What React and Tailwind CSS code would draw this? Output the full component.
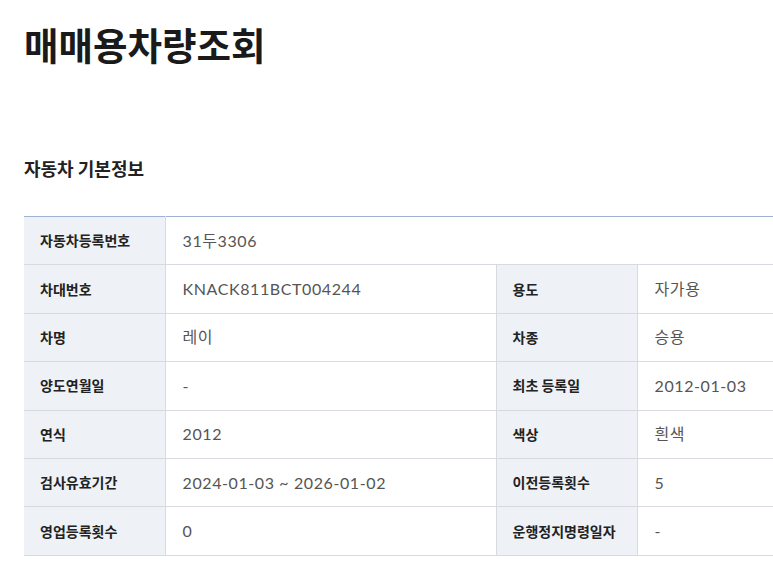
const rows = [
  { label: '차대번호', value: 'KNACK811BCT004244', label2: '용도', value2: '자가용' },
  { label: '차명', value: '레이', label2: '차종', value2: '승용' },
  { label: '양도연월일', value: '-', label2: '최초 등록일', value2: '2012-01-03' },
  { label: '연식', value: '2012', label2: '색상', value2: '흰색' },
  { label: '검사유효기간', value: '2024-01-03 ~ 2026-01-02', label2: '이전등록횟수', value2: '5' },
  { label: '영업등록횟수', value: '0', label2: '운행정지명령일자', value2: '-' },
];

function Label({ children }) {
  return (
    <th className="border-b border-r border-[#d7dae1] bg-[#eef1f6] pl-4 text-left text-[14px] font-bold text-[#222]">
      {children}
    </th>
  );
}

function Value({ children, span }) {
  return (
    <td
      colSpan={span}
      className="border-b border-r border-[#d7dae1] pl-[17px] font-[Lato,'Noto_Sans_CJK_KR',sans-serif] text-[16px] tracking-[0.6px] text-[#555]"
    >
      {children}
    </td>
  );
}

export default function App() {
  return (
    <div className="min-h-screen w-[773px] overflow-hidden bg-white font-['Noto_Sans_CJK_KR',sans-serif]">
      <div className="pl-6 pt-[18px]">
        <h1 className="text-[37.5px] font-bold leading-[52px] text-[#1a1a1a]">매매용차량조회</h1>
        <h2 className="mt-[86px] text-[18px] font-bold leading-6 text-[#222]">자동차 기본정보</h2>
        <table className="mt-[36px] w-[760px] table-fixed border-collapse border-t border-t-[#9fb2d2]">
          <colgroup>
            <col className="w-[141px]" />
            <col className="w-[331px]" />
            <col className="w-[141px]" />
            <col />
          </colgroup>
          <tbody>
            <tr className="h-[48.4px]">
              <Label>자동차등록번호</Label>
              <Value span={3}>31두3306</Value>
            </tr>
            {rows.map((r) => (
              <tr key={r.label} className="h-[48.4px]">
                <Label>{r.label}</Label>
                <Value>{r.value}</Value>
                <Label>{r.label2}</Label>
                <Value>{r.value2}</Value>
              </tr>
            ))}
          </tbody>
        </table>
      </div>
    </div>
  );
}
